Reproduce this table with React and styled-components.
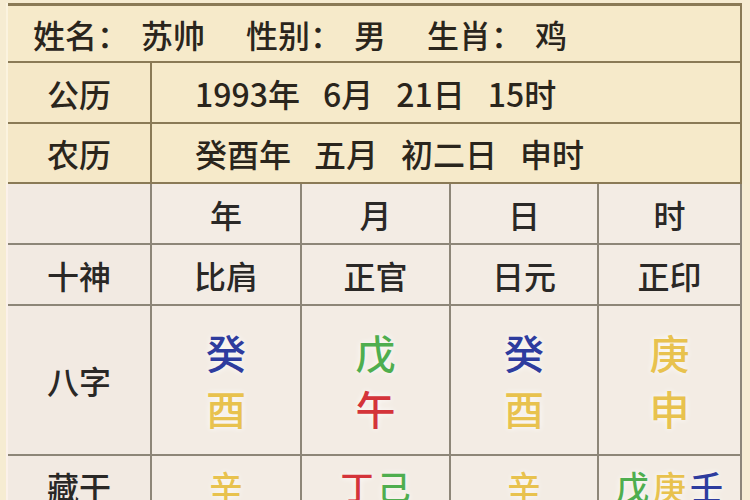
import React from "react";
import styled, { createGlobalStyle } from "styled-components";

const GlobalStyle = createGlobalStyle`
  html, body {
    margin: 0;
    padding: 0;
    background: #f6ecd2;
    overflow: hidden;
  }
  body {
    font-family: "Noto Sans CJK SC", "Noto Sans", sans-serif;
  }
`;

const colors = {
  blue: "#2e3c9e",
  gold: "#e8c24e",
  green: "#4fae4f",
  red: "#d4343a",
};

const pillars = [
  { head: "年", god: "比肩", stem: ["癸", "blue"], branch: ["酉", "gold"], hidden: [["辛", "gold"]] },
  { head: "月", god: "正官", stem: ["戊", "green"], branch: ["午", "red"], hidden: [["丁", "red"], ["己", "green"]] },
  { head: "日", god: "日元", stem: ["癸", "blue"], branch: ["酉", "gold"], hidden: [["辛", "gold"]] },
  { head: "时", god: "正印", stem: ["庚", "gold"], branch: ["申", "gold"], hidden: [["戊", "green"], ["庚", "gold"], ["壬", "blue"]] },
];

function BaziChart() {
  return (
    <Sheet>
      <TopBlock>
        <NameCell>
          <Field>
            姓名：<Value>苏帅</Value>
          </Field>
          <Field>
            性别：<Value>男</Value>
          </Field>
          <Field>
            生肖：<Value>鸡</Value>
          </Field>
        </NameCell>

        <TopLabel>公历</TopLabel>
        <DateCell>
          <span>1993年</span>
          <span>6月</span>
          <span>21日</span>
          <span>15时</span>
        </DateCell>

        <TopLabel>农历</TopLabel>
        <DateCell>
          <span>癸酉年</span>
          <span>五月</span>
          <span>初二日</span>
          <span>申时</span>
        </DateCell>
      </TopBlock>

      <Grid>
        <LabelCell />
        {pillars.map((p) => (
          <Cell key={"h" + p.head}>{p.head}</Cell>
        ))}

        <LabelCell>十神</LabelCell>
        {pillars.map((p) => (
          <Cell key={"g" + p.head}>{p.god}</Cell>
        ))}

        <LabelCell>八字</LabelCell>
        {pillars.map((p) => (
          <BaziCell key={"b" + p.head}>
            <Glyph $tone={p.stem[1]}>{p.stem[0]}</Glyph>
            <Glyph $tone={p.branch[1]}>{p.branch[0]}</Glyph>
          </BaziCell>
        ))}

        <LabelCell>藏干</LabelCell>
        {pillars.map((p) => (
          <HiddenCell key={"c" + p.head}>
            {p.hidden.map(([ch, tone], i) => (
              <Glyph key={i} $tone={tone}>
                {ch}
              </Glyph>
            ))}
          </HiddenCell>
        ))}
      </Grid>
    </Sheet>
  );
}

export default function App() {
  return (
    <>
      <GlobalStyle />
      <BaziChart />
    </>
  );
}

const Sheet = styled.div`
  width: 736px;
  margin-left: 6px;
  padding-top: 3px;
`;

const TopBlock = styled.div`
  display: grid;
  grid-template-columns: 142px 1fr;
  grid-template-rows: 55px 59px 58px;
  gap: 2px;
  background: #8a7a56;
  border-left: 2px solid #fbf3df;
  padding: 3px 2px 2px 0;
`;

const TopBase = styled.div`
  background: #f6eaca;
  color: #2a251c;
  font-size: 32px;
  font-weight: 500;
  display: flex;
  align-items: center;
`;

const NameCell = styled(TopBase)`
  grid-column: 1 / -1;
  padding-left: 25px;
  gap: 41px;
`;

const Field = styled.span`
  display: inline-flex;
  align-items: center;
`;

const Value = styled.span`
  margin-left: 12px;
`;

const TopLabel = styled(TopBase)`
  justify-content: center;
  background: #f5e8c8;
`;

const DateCell = styled(TopBase)`
  padding-left: 43px;
  gap: 23px;
`;

const Grid = styled.div`
  display: grid;
  grid-template-columns: 142px 148px 147px 146px 141px;
  grid-template-rows: 59px 59px 148px 60px;
  gap: 2px;
  background: #8d8678;
  border-left: 2px solid #fbf1ea;
  padding-right: 2px;
`;

const Cell = styled.div`
  background: #f3ece4;
  color: #2a2826;
  font-size: 32px;
  font-weight: 500;
  display: flex;
  align-items: center;
  justify-content: center;
`;

const LabelCell = styled(Cell)`
  background: #f2eae2;
`;

const BaziCell = styled(Cell)`
  flex-direction: column;
  font-size: 40px;
  line-height: 56px;
`;

const HiddenCell = styled(Cell)`
  font-size: 33px;
  gap: 4px;
`;

const Glyph = styled.span`
  color: ${(p) => colors[p.$tone]};
  text-shadow: 0 0 6px rgba(255, 255, 255, 0.9);
`;
